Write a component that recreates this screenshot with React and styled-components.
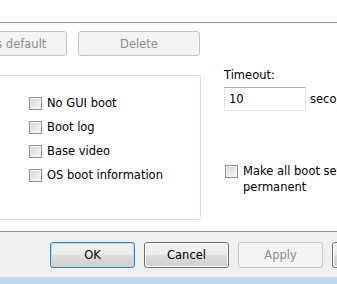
import styled, { createGlobalStyle } from "styled-components";

const GlobalStyle = createGlobalStyle`
  body {
    margin: 0;
    background: #f0f0f0;
    font-family: "DejaVu Sans", Tahoma, sans-serif;
    font-size: 11.5px;
    color: #000;
  }
`;

const Window = styled.div`
  width: 337px;
  height: 284px;
  overflow: hidden;
  display: flex;
  flex-direction: column;
  background: #f0f0f0;
`;

const TabStrip = styled.div`
  height: 22px;
  background: #fff;
`;

const Panel = styled.div`
  box-sizing: border-box;
  height: 210px;
  background: #fff;
  border-top: 1px solid #8e8f8f;
  border-bottom: 1px solid #8e8f8f;
  padding-top: 8px;
`;

const ButtonRow = styled.div`
  display: flex;
  gap: 11px;
  margin-left: -54px;
`;

const Button = styled.button`
  box-sizing: border-box;
  width: ${(p) => p.w || 85}px;
  height: ${(p) => p.h || 26}px;
  flex-shrink: 0;
  padding: 0;
  font-family: inherit;
  font-size: 11.5px;
  border-radius: 3px;
  color: ${(p) => (p.disabled ? "#8b8b8b" : "#000")};
  border: 1px solid
    ${(p) => (p.disabled ? "#c3c6c9" : p.primary ? "#3c7fb1" : "#707070")};
  background: ${(p) =>
    p.disabled
      ? "#f4f4f4"
      : "linear-gradient(#f2f2f2 0%, #ebebeb 50%, #dddddd 51%, #cfcfcf 100%)"};
  box-shadow: ${(p) =>
    p.primary
      ? "inset 0 0 0 1px #a8e0f8"
      : p.disabled
      ? "none"
      : "inset 0 0 0 1px #fcfcfc"};
`;

const Body = styled.div`
  display: flex;
  align-items: flex-start;
  margin-top: 13px;
`;

const GroupBox = styled.div`
  box-sizing: border-box;
  flex-shrink: 0;
  width: 221px;
  height: 145px;
  margin: 6px 0 0 -20px;
  border: 1px solid #d5dfe5;
  border-radius: 3px;
  padding: 21px 0 0 48px;
  display: flex;
  flex-direction: column;
  gap: 11px;
`;

const CheckRow = styled.label`
  display: flex;
  align-items: ${(p) => (p.top ? "flex-start" : "center")};
  gap: 5px;
  height: ${(p) => (p.top ? "auto" : "13px")};
  line-height: ${(p) => (p.top ? "16px" : "13px")};
  white-space: nowrap;
`;

const Box = styled.span`
  box-sizing: border-box;
  width: 13px;
  height: 13px;
  flex-shrink: 0;
  border: 1px solid #8e8f8f;
  background: linear-gradient(135deg, #d2d2d2 0%, #eaeaea 60%, #fafafa 100%);
  box-shadow: inset 0 0 0 1px #f4f4f4;
  margin-top: ${(p) => p.offset || 0}px;
`;

const WrapText = styled.span`
  width: 130px;
  white-space: normal;
`;

const RightCol = styled.div`
  display: flex;
  flex-direction: column;
  margin-left: 23px;
  flex-shrink: 0;
`;

const FieldLabel = styled.div`
  line-height: 13px;
`;

const InputRow = styled.div`
  display: flex;
  align-items: center;
  gap: 4px;
  margin-top: 5px;
  white-space: nowrap;
`;

const TextInput = styled.div`
  box-sizing: border-box;
  width: 82px;
  height: 24px;
  padding-left: 4px;
  display: flex;
  align-items: center;
  border: 1px solid #dfe3e8;
  border-top-color: #abadb3;
  background: #fff;
`;

const PermRow = styled(CheckRow)`
  margin: 52px 0 0 1px;
`;

const Footer = styled.div`
  height: 45px;
  display: flex;
  gap: 9px;
  padding: 10px 0 0 50px;
  box-sizing: border-box;
`;

const FrameEdge = styled.div`
  height: 7px;
  background: #c1d6ef;
`;

export default function App() {
  return (
    <Window>
      <GlobalStyle />
      <TabStrip />
      <Panel>
        <ButtonRow>
          <Button w={121} h={25} disabled>
            Set as default
          </Button>
          <Button w={122} h={25} disabled>
            Delete
          </Button>
        </ButtonRow>
        <Body>
          <GroupBox>
            <CheckRow>
              <Box />
              No GUI boot
            </CheckRow>
            <CheckRow>
              <Box />
              Boot log
            </CheckRow>
            <CheckRow>
              <Box />
              Base video
            </CheckRow>
            <CheckRow>
              <Box />
              OS boot information
            </CheckRow>
          </GroupBox>
          <RightCol>
            <FieldLabel>Timeout:</FieldLabel>
            <InputRow>
              <TextInput>10</TextInput>
              seconds
            </InputRow>
            <PermRow top>
              <Box offset={2} />
              <WrapText>Make all boot settings permanent</WrapText>
            </PermRow>
          </RightCol>
        </Body>
      </Panel>
      <Footer>
        <Button primary>OK</Button>
        <Button>Cancel</Button>
        <Button disabled>Apply</Button>
        <Button>Help</Button>
      </Footer>
      <FrameEdge />
    </Window>
  );
}
